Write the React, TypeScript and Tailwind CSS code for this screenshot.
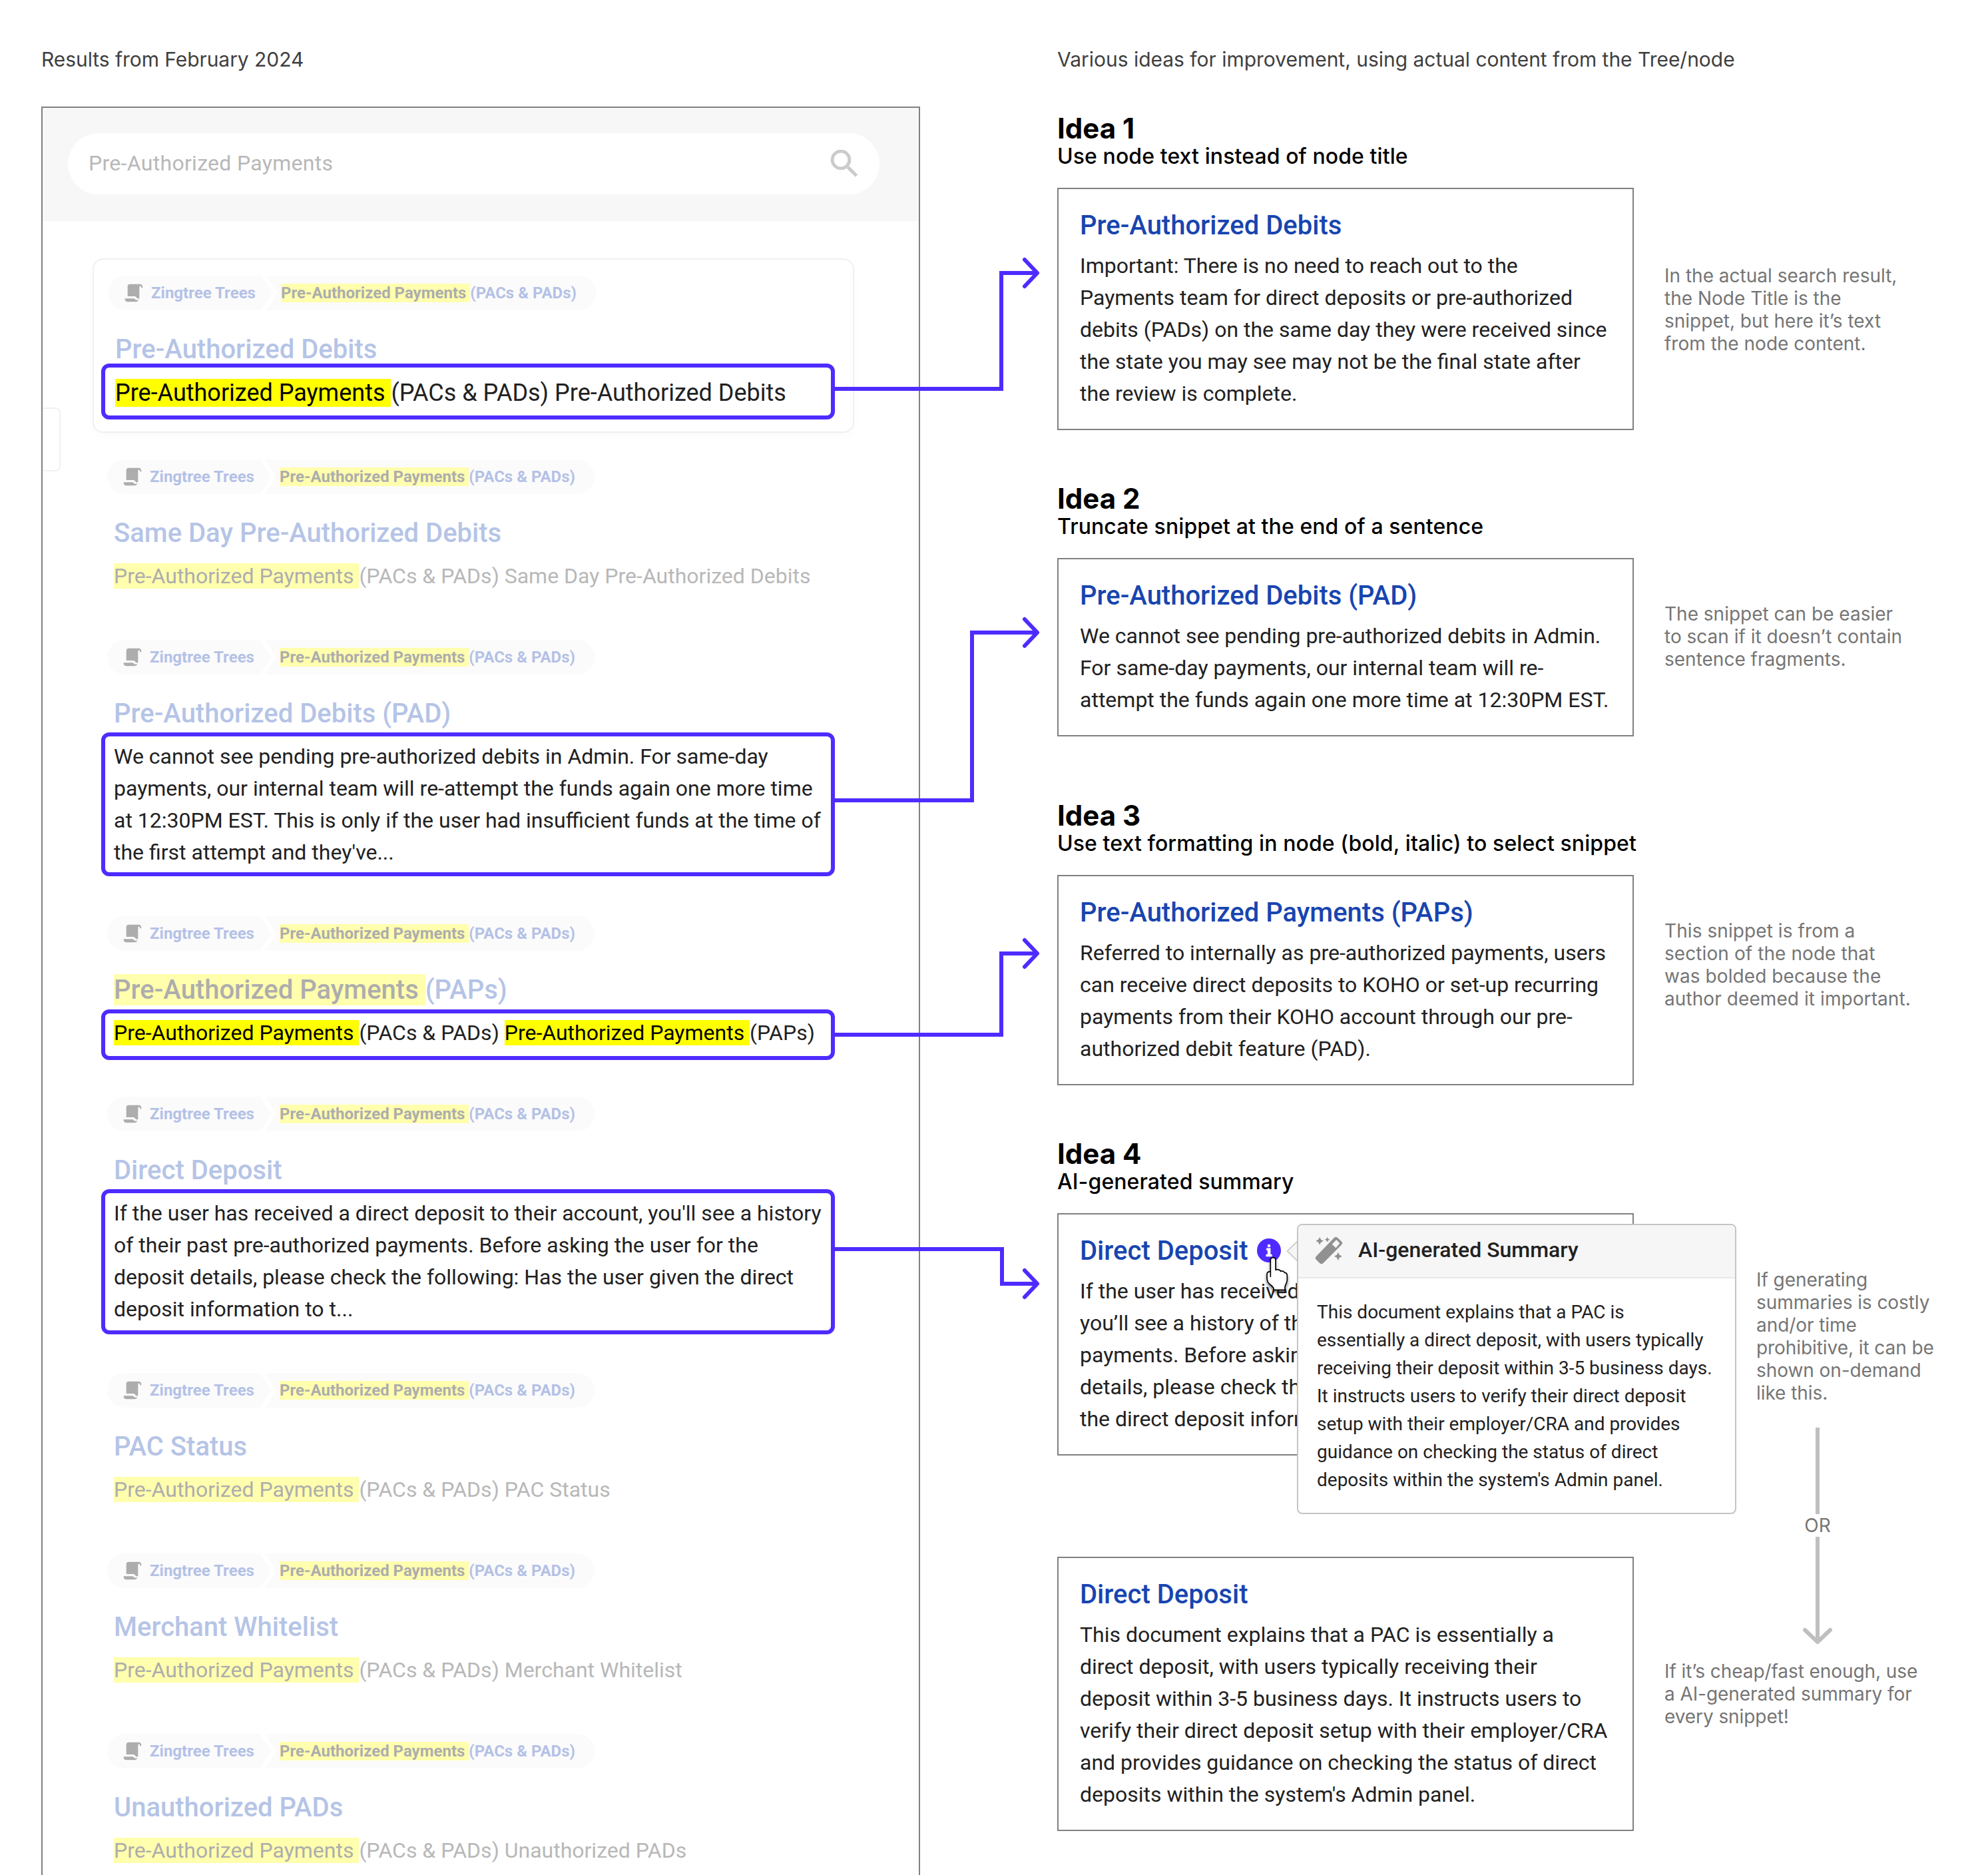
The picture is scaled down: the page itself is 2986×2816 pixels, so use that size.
import { type ReactNode } from "react";

function ScrollIcon() {
  return (
    <svg className="h-[28px] w-[28px]" viewBox="111 78 84 84" fill="#adadad">
      <path d="M136 80Q125 80 125 91V135H158Q166 137 168 145H178V96Q178 88 182 88Q187 89 187 97H193Q194 80 180 80Z" />
      <path d="M113 145H155Q160 153 168 152Q172 152 175 150Q172 160 162 160H124Q112 158 113 145Z" />
    </svg>
  );
}

function Faded({ children }: { children: ReactNode }) {
  return <span className="bg-[#ffffad] text-[#adadad]">{children}</span>;
}

function Mark({ children }: { children: ReactNode }) {
  return <span className="bg-[#ffff00] text-black">{children}</span>;
}

function Breadcrumb() {
  return (
    <div className="flex h-[52px] text-[24px] font-bold leading-[52px] text-[#b4c1e6]">
      <div className="flex w-[247px] items-center rounded-l-[26px] bg-[#fbfbfb] pl-[24px] [clip-path:polygon(0_0,calc(100%_-_18px)_0,100%_50%,calc(100%_-_18px)_100%,0_100%)]">
        <ScrollIcon />
        <span className="ml-[12px] whitespace-nowrap">Zingtree Trees</span>
      </div>
      <div className="-ml-[10px] w-[495px] whitespace-pre rounded-r-[26px] bg-[#fbfbfb] pl-[22px] [clip-path:polygon(0_0,100%_0,100%_100%,0_100%,17px_50%)]">
        <Faded>Pre-Authorized Payments </Faded>(PACs &amp; PADs)
      </div>
    </div>
  );
}

function Result({ title, lines, box, large }: { title: ReactNode; lines: ReactNode[]; box?: string; large?: boolean }) {
  return (
    <div>
      <Breadcrumb />
      <div className="pl-[10px]">
        <div className="mt-[33px] whitespace-pre text-[40px] font-medium leading-[52px] text-[#b5c4e6]">{title}</div>
        <div
          className={
            "relative whitespace-pre leading-[48px] " +
            (large ? "mt-[15px] text-[36px] " : "mt-[14px] text-[32px] ") +
            (box ? "text-[#212122]" : "text-[#b8b8b8]")
          }
        >
          {box && <div className={"absolute w-[1102px] rounded-[12px] border-[6px] border-[#4f2bff] " + box} />}
          {lines.map((l, i) => (
            <div key={i} className="relative">{l}</div>
          ))}
        </div>
      </div>
    </div>
  );
}

function SearchPanel() {
  return (
    <div className="relative ml-[62px] mt-[53px] h-[2700px] w-[1320px] shrink-0 border-2 border-[#808080]">
      <div className="h-[170px] bg-[#f7f7f7] pl-[38px] pt-[38px]">
        <div className="flex h-[92px] w-[1219px] items-center rounded-full bg-white pl-[31px] pr-[32px] text-[32px] tracking-[0.3px] text-[#b8b8b8]">
          <span className="-mt-[2px] flex-1">Pre-Authorized Payments</span>
          <svg className="h-[42px] w-[42px]" viewBox="0 0 42 42" fill="none" stroke="#cbcbcb">
            <circle cx="16" cy="15" r="12.9" strokeWidth="4.8" />
            <path d="M26.5 26L39.5 39" strokeWidth="5" />
          </svg>
        </div>
      </div>
      <div className="absolute left-0 top-[450px] h-[96px] w-[27px] rounded-r-lg border-2 border-l-0 border-[#f1f1f1]" />
      <div className="ml-[75px] mt-[56px] h-[262px] w-[1144px] rounded-[16px] border-2 border-[#f0f0f0] pl-[22px] pt-[24px] shadow-[0_6px_12px_rgba(0,0,0,0.02)]">
        <Result
          title="Pre-Authorized Debits"
          large
          box="-left-[21px] -top-[20px] h-[84px]"
          lines={[<><Mark>Pre-Authorized Payments </Mark>(PACs &amp; PADs) Pre-Authorized Debits</>]}
        />
      </div>
      <div className="ml-[97px] mt-[40px] flex flex-col gap-[72px]">
        <Result title="Same Day Pre-Authorized Debits" lines={[<><Faded>Pre-Authorized Payments </Faded>(PACs &amp; PADs) Same Day Pre-Authorized Debits</>]} />
        <Result
          title="Pre-Authorized Debits (PAD)"
          box="-left-[19px] -top-[12px] h-[216px]"
          lines={[
            "We cannot see pending pre-authorized debits in Admin. For same-day",
            "payments, our internal team will re-attempt the funds again one more time",
            "at 12:30PM EST. This is only if the user had insufficient funds at the time of",
            "the first attempt and they've...",
          ]}
        />
        <Result
          title={<><Faded>Pre-Authorized Payments </Faded>(PAPs)</>}
          box="-left-[19px] -top-[11px] h-[76px]"
          lines={[<><Mark>Pre-Authorized Payments </Mark>(PACs &amp; PADs) <Mark>Pre-Authorized Payments </Mark>(PAPs)</>]}
        />
        <Result
          title="Direct Deposit"
          box="-left-[19px] -top-[12px] h-[218px]"
          lines={[
            "If the user has received a direct deposit to their account, you'll see a history",
            "of their past pre-authorized payments. Before asking the user for the",
            "deposit details, please check the following: Has the user given the direct",
            "deposit information to t...",
          ]}
        />
        <Result title="PAC Status" lines={[<><Faded>Pre-Authorized Payments </Faded>(PACs &amp; PADs) PAC Status</>]} />
        <Result title="Merchant Whitelist" lines={[<><Faded>Pre-Authorized Payments </Faded>(PACs &amp; PADs) Merchant Whitelist</>]} />
        <Result title="Unauthorized PADs" lines={[<><Faded>Pre-Authorized Payments </Faded>(PACs &amp; PADs) Unauthorized PADs</>]} />
      </div>
    </div>
  );
}

function Heading({ n, children }: { n: number; children: ReactNode }) {
  return (
    <div className="h-[126px] whitespace-nowrap pt-[12px] font-['Inter'] text-black">
      <div className="text-[42px] font-bold leading-[50px]">Idea {n}</div>
      <div className="-mt-[2px] text-[32px] font-medium leading-[38px] tracking-[0.09px]">{children}</div>
    </div>
  );
}

function Card({ title, lines, children }: { title: string; lines: string[]; children?: ReactNode }) {
  return (
    <div className="relative w-[866px] shrink-0 whitespace-nowrap border-2 border-[#808080] pb-[29px] pl-[32px] pt-[29px]">
      <div className="text-[40px] font-medium leading-[52px] text-[#1845b0]">{title}</div>
      <div className="mt-[10px] text-[32px] leading-[48px]">
        {lines.map((l) => <div key={l}>{l}</div>)}
      </div>
      {children}
    </div>
  );
}

function Note({ className, lines }: { className: string; lines: string[] }) {
  return (
    <div className={"whitespace-nowrap font-['Inter'] text-[28px] leading-[34px] text-[#757575] " + className}>
      {lines.map((l) => <div key={l}>{l}</div>)}
    </div>
  );
}

function Popover() {
  return (
    <div className="absolute left-[358px] top-[14px] z-10">
      <svg className="absolute -left-[60px] top-[22px] h-[36px] w-[36px]" viewBox="-18 -18 36 36">
        <circle r="18" fill="#4f2bff" />
        <circle cx="0" cy="-7" r="2.3" fill="#fff" />
        <path d="M-3.7-3.2H2.1V6H4.3V9H-4.2V6H-1.9V-.2H-3.7Z" fill="#fff" stroke="#fff" strokeWidth=".6" strokeLinejoin="round" />
      </svg>
      <svg className="absolute -left-[16px] top-[24px] h-[34px] w-[18px]" viewBox="0 0 18 34" fill="#f6f6f6" stroke="#d0d0d0" strokeWidth="2">
        <path d="M18 1L1.5 17L18 33" />
      </svg>
      <svg
        className="absolute -left-[52px] top-[46px] h-[64px] w-[48px] [filter:drop-shadow(0_3px_2px_rgba(0,0,0,0.5))]"
        viewBox="78 162 144 192"
        fill="#fff"
        stroke="#000"
        strokeWidth="5"
        strokeLinejoin="round"
        strokeLinecap="round"
      >
        <path d="M115 262V188C115 172 138 172 138 188V232C146 228 158 230 161 238C169 235 176 238 178 244C186 244 190 250 190 258V276C190 290 182 298 180 308V322H129V314C122 302 110 298 103 286C98 278 99 262 99 250C100 243 106 239 115 240Z" />
      </svg>
      <div className="relative h-[436px] w-[660px] rounded-lg border-2 border-[#c4c4c4] bg-white">
        <div className="flex h-[80px] items-center rounded-t-md border-b-2 border-[#e8e8e8] bg-[#f6f6f6] pl-[25px]">
          <svg className="-mt-[2px] h-[42px] w-[42px]" viewBox="316 82 124 124" fill="#919191">
            <path fillRule="evenodd" d="M401 88Q409 80 417 88L434 104Q442 112 434 119L353 200Q345 208 337 200L322 185Q314 177 322 170ZM392 117L409 133L426 112L411 97Z" />
            <path d="M337 85L343 96L354 102L343 108L337 119L331 108L320 102L331 96ZM371 85L375 92L382 96L375 100L371 107L367 100L360 96L367 92ZM419 152L425 164L437 170L425 176L419 188L413 176L401 170L413 164Z" />
          </svg>
          <span className="-mt-[5px] ml-[23px] text-[32px] font-medium">AI-generated Summary</span>
        </div>
        <div className="pl-[28px] pt-[30px] text-[28px] leading-[42px]">
          <div>This document explains that a PAC is</div>
          <div>essentially a direct deposit, with users typically</div>
          <div>receiving their deposit within 3-5 business days.</div>
          <div>It instructs users to verify their direct deposit</div>
          <div>setup with their employer/CRA and provides</div>
          <div>guidance on checking the status of direct</div>
          <div>deposits within the system's Admin panel.</div>
        </div>
      </div>
    </div>
  );
}

function Connectors() {
  return (
    <svg className="pointer-events-none absolute left-0 top-0 h-[2816px] w-[1600px]" fill="none" stroke="#4f2bff" strokeWidth="6">
      <path d="M1254 584H1504V410H1557M1254 1202H1460V950H1557M1254 1554H1504V1432H1557M1254 1876H1505V1928H1557" />
      <path
        d="M1539 390L1558 410L1539 430M1539 930L1558 950L1539 970M1539 1412L1558 1432L1539 1452M1539 1908L1558 1928L1539 1948"
        strokeLinecap="round"
        strokeLinejoin="round"
      />
    </svg>
  );
}

export default function App() {
  return (
    <div className="relative flex h-[2816px] w-[2986px] overflow-hidden bg-white font-['Roboto'] text-[#212122]">
      <div className="w-[1588px] shrink-0 pt-[71px]">
        <div className="ml-[62px] h-[36px] font-['Inter'] text-[30px] leading-[36px] tracking-[-0.06px] text-[#404040]">Results from February 2024</div>
        <SearchPanel />
      </div>
      <div className="pt-[71px]">
        <div className="h-[85px] whitespace-nowrap font-['Inter'] text-[30px] leading-[36px] tracking-[-0.02px] text-[#404040]">
          Various ideas for improvement, using actual content from the Tree/node
        </div>
        <div>
          <Heading n={1}>Use node text instead of node title</Heading>
          <div className="flex">
            <Card
              title="Pre-Authorized Debits"
              lines={[
                "Important: There is no need to reach out to the",
                "Payments team for direct deposits or pre-authorized",
                "debits (PADs) on the same day they were received since",
                "the state you may see may not be the final state after",
                "the review is complete.",
              ]}
            />
            <Note className="ml-[46px] mt-[115px]" lines={["In the actual search result,", "the Node Title is the", "snippet, but here it’s text", "from the node content."]} />
          </div>
        </div>
        <div className="mt-[66px]">
          <Heading n={2}>Truncate snippet at the end of a sentence</Heading>
          <div className="flex">
            <Card
              title="Pre-Authorized Debits (PAD)"
              lines={[
                "We cannot see pending pre-authorized debits in Admin.",
                "For same-day payments, our internal team will re-",
                "attempt the funds again one more time at 12:30PM EST.",
              ]}
            />
            <Note className="ml-[46px] mt-[67px]" lines={["The snippet can be easier", "to scan if it doesn’t contain", "sentence fragments."]} />
          </div>
        </div>
        <div className="mt-[82px]">
          <Heading n={3}>Use text formatting in node (bold, italic) to select snippet</Heading>
          <div className="flex">
            <Card
              title="Pre-Authorized Payments (PAPs)"
              lines={[
                "Referred to internally as pre-authorized payments, users",
                "can receive direct deposits to KOHO or set-up recurring",
                "payments from their KOHO account through our pre-",
                "authorized debit feature (PAD).",
              ]}
            />
            <Note className="ml-[46px] mt-[67px] tracking-[0.08px]" lines={["This snippet is from a", "section of the node that", "was bolded because the", "author deemed it important."]} />
          </div>
        </div>
        <div className="mt-[66px]">
          <Heading n={4}>AI-generated summary</Heading>
          <div className="flex">
            <Card
              title="Direct Deposit"
              lines={[
                "If the user has received a direct deposit to their",
                "you’ll see a history of their past pre-authorized",
                "payments. Before asking the user for the deposit",
                "details, please check the following: Has the user",
                "the direct deposit information to them?",
              ]}
            >
              <Popover />
            </Card>
            <div className="ml-[184px] mt-[83px] h-[280px] w-[320px]">
              <Note className="tracking-[-0.07px]" lines={["If generating", "summaries is costly", "and/or time", "prohibitive, it can be", "shown on-demand", "like this."]} />
              <div className="mt-[35px] flex w-[184px] flex-col items-center">
                <div className="h-[130px] w-[6px] bg-[#bfbfbf]" />
                <Note className="" lines={["OR"]} />
                <svg className="h-[164px] w-[48px]" viewBox="0 0 48 164" fill="none" stroke="#bfbfbf" strokeWidth="6">
                  <path d="M24 0V158" />
                  <path d="M5 140L24 158L43 140" strokeLinecap="round" strokeLinejoin="round" />
                </svg>
              </div>
            </div>
          </div>
        </div>
        <div className="mt-[152px] flex">
          <Card
            title="Direct Deposit"
            lines={[
              "This document explains that a PAC is essentially a",
              "direct deposit, with users typically receiving their",
              "deposit within 3-5 business days. It instructs users to",
              "verify their direct deposit setup with their employer/CRA",
              "and provides guidance on checking the status of direct",
              "deposits within the system's Admin panel.",
            ]}
          />
          <Note className="ml-[46px] mt-[155px] tracking-[-0.08px]" lines={["If it’s cheap/fast enough, use", "a AI-generated summary for", "every snippet!"]} />
        </div>
      </div>
      <Connectors />
    </div>
  );
}
